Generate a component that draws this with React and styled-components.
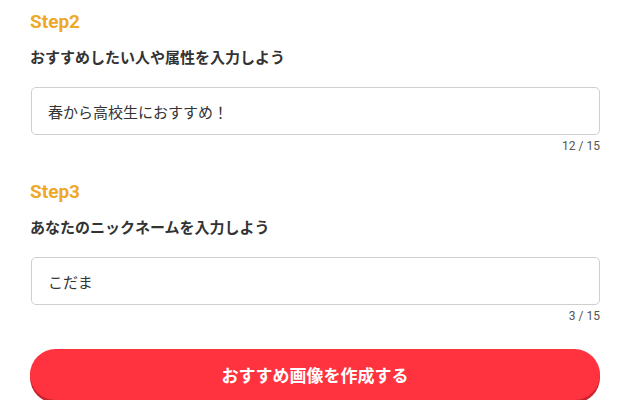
import styled, { createGlobalStyle } from "styled-components";

const GlobalStyle = createGlobalStyle`
  body {
    margin: 0;
    background: #fff;
    font-family: Roboto, "Noto Sans CJK JP", sans-serif;
    color: #333;
  }
`;

const Page = styled.div`
  padding: 10px 23px 0 30px;
  display: flex;
  flex-direction: column;
`;

const Section = styled.section`
  display: flex;
  flex-direction: column;
  margin-bottom: 27px;
`;

const StepTitle = styled.h2`
  margin: 0;
  font-size: 19px;
  line-height: 24px;
  font-weight: 700;
  color: #eda927;
`;

const Label = styled.p`
  margin: 14px 0 0;
  font-size: 15px;
  line-height: 20px;
  font-weight: 700;
  color: #333;
`;

const Field = styled.div`
  margin-top: 19px;
  margin-left: 1px;
  height: 46px;
  border: 1px solid #cfcfcf;
  border-radius: 5px;
  display: flex;
  align-items: center;
  padding: 0 16px;
  font-size: 15px;
  color: #333;
`;

const Counter = styled.div`
  margin-top: 4px;
  text-align: right;
  font-size: 12px;
  line-height: 14px;
  color: #555;
`;

const SubmitButton = styled.button`
  margin-top: -1px;
  height: 51px;
  border: none;
  border-radius: 26px;
  background: #ff3340;
  box-shadow: 0 3px 0 #c9232e;
  color: #fff;
  font-family: Roboto, "Noto Sans CJK JP", sans-serif;
  font-size: 17px;
  font-weight: 700;
`;

const steps = [
  { step: "Step2", label: "おすすめしたい人や属性を入力しよう", value: "春から高校生におすすめ！", max: 15 },
  { step: "Step3", label: "あなたのニックネームを入力しよう", value: "こだま", max: 15 },
];

export default function App() {
  return (
    <>
      <GlobalStyle />
      <Page>
        {steps.map((s) => (
          <Section key={s.step}>
            <StepTitle>{s.step}</StepTitle>
            <Label>{s.label}</Label>
            <Field>{s.value}</Field>
            <Counter>
              {s.value.length} / {s.max}
            </Counter>
          </Section>
        ))}
        <SubmitButton>おすすめ画像を作成する</SubmitButton>
      </Page>
    </>
  );
}
